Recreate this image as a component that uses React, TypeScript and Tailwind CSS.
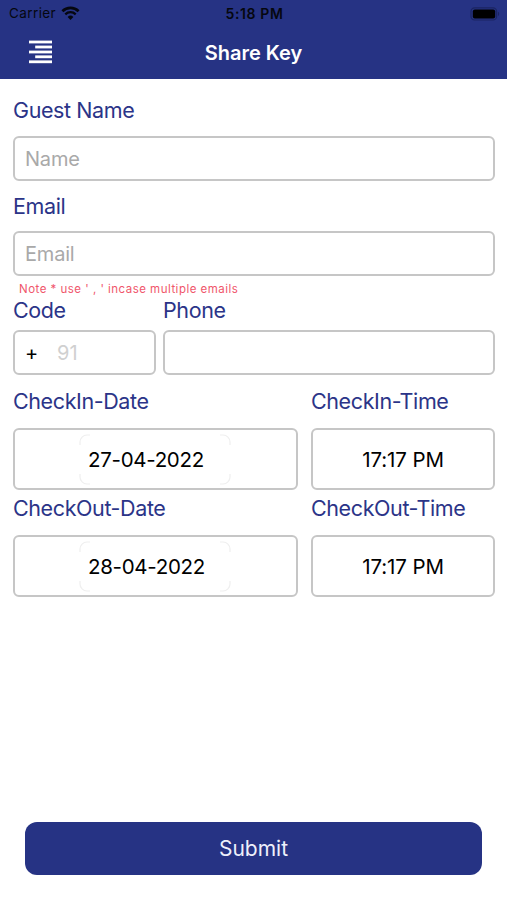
import type { ReactNode } from 'react'
import clsx from 'clsx'

interface LabelProps {
  children: ReactNode
  className?: string
}

function Label({ children, className }: LabelProps) {
  return (
    <div
      className={clsx('h-[30px] text-[21.5px] leading-[29px] tracking-[-0.4px] whitespace-nowrap text-[#2b3488]', className)}
    >
      {children}
    </div>
  )
}

interface BoxProps {
  children?: ReactNode
  className?: string
}

function Box({ children, className }: BoxProps) {
  return (
    <div className={clsx('flex items-center rounded-[6px] border-2 border-[#c6c6c6] bg-white', className)}>
      {children}
    </div>
  )
}

function WifiIcon() {
  return (
    <svg width="19" height="15" viewBox="0 0 19 15" className="ml-[5px]" fill="none" stroke="#05070f">
      <path d="M1.4 5.2a11.7 11.7 0 0 1 16.2 0" strokeWidth="2.7" />
      <path d="M4.3 8.3a7.5 7.5 0 0 1 10.4 0" strokeWidth="2.3" />
      <path d="M9.5 14l-2.9-3.1a4.2 4.2 0 0 1 5.8 0z" fill="#05070f" stroke="none" />
    </svg>
  )
}

function BatteryIcon() {
  return (
    <svg width="30" height="14" viewBox="0 0 30 14">
      <rect x="1" y="0.8" width="25.6" height="12.2" rx="3.6" fill="none" stroke="#1b2562" strokeWidth="1.2" />
      <rect x="2.8" y="2.4" width="22.4" height="9" rx="2" fill="#000" />
      <path d="M28 4.8v4.2c1.6-.6 1.6-3.6 0-4.2z" fill="#1b2562" />
    </svg>
  )
}

function MenuIcon() {
  return (
    <svg width="23" height="24" viewBox="0 0 23 24" fill="#fff">
      <rect x="0" y="0.6" width="23" height="2.8" />
      <rect x="6.2" y="5.6" width="16.8" height="2.8" />
      <rect x="0" y="10.6" width="23" height="2.8" />
      <rect x="6.2" y="15.4" width="16.8" height="2.8" />
      <rect x="0" y="20.4" width="23" height="2.8" />
    </svg>
  )
}

// faint corner marks around the date picker
function PickerFrame() {
  return (
    <svg
      width="152"
      height="51"
      viewBox="0 0 152 51"
      className="absolute top-[4px] left-[64px]"
      fill="none"
      stroke="#efefef"
      strokeWidth="1.2"
    >
      <path d="M1 11V8a7 7 0 0 1 7-7h3M141 1h3a7 7 0 0 1 7 7v3M151 40v3a7 7 0 0 1-7 7h-3M11 50H8a7 7 0 0 1-7-7v-3" />
    </svg>
  )
}

interface DateRowProps {
  name: string
  date: string
  time: string
}

function DateRow({ name, date, time }: DateRowProps) {
  return (
    <div className="grid grid-cols-[285px_184px] gap-x-[13px]">
      <Label>{name}-Date</Label>
      <Label>{name}-Time</Label>
      <Box className="relative mt-[11px] h-[62px] pt-[2px] pl-[73px]">
        <PickerFrame />
        <span className="relative text-[20.5px] tracking-[-0.3px] whitespace-nowrap text-black">{date}</span>
      </Box>
      <Box className="mt-[11px] h-[62px] justify-center pt-[2px]">
        <span className="text-[20.5px] tracking-[-0.1px] whitespace-nowrap text-black">{time}</span>
      </Box>
    </div>
  )
}

export default function App() {
  return (
    <div className="flex h-[900px] w-[507px] flex-col overflow-hidden bg-white font-['Inter',sans-serif]">
      <header className="h-[79px] shrink-0 bg-[#263384]">
        <div className="grid h-[27px] grid-cols-3 items-center pr-[7px] pl-[9px] text-[#05070f]">
          <div className="flex items-center text-[13.5px] tracking-[0.4px]">
            Carrier
            <WifiIcon />
          </div>
          <div className="text-center text-[14px] font-semibold tracking-[0.6px]">5:18 PM</div>
          <div className="flex justify-end">
            <BatteryIcon />
          </div>
        </div>
        <div className="grid h-[50px] grid-cols-[1fr_auto_1fr] items-center px-[29px]">
          <MenuIcon />
          <h1 className="pt-px text-[20px] font-semibold text-white">Share Key</h1>
        </div>
      </header>

      <main className="flex-1 pt-[17px] pr-[12px] pl-[13px]">
        <Label>Guest Name</Label>
        <Box className="mt-[10px] h-[45px] pl-[10px] text-[20px] tracking-[-0.2px] text-[#a9a9a9]">Name</Box>
        <Label className="mt-[11px]">Email</Label>
        <Box className="mt-[9px] h-[45px] pl-[10px] text-[20px] tracking-[-0.2px] text-[#a9a9a9]">Email</Box>
        <div className="h-[20px] pt-[5px] pl-[6px] text-[11.5px] leading-[17px] tracking-[0.48px] whitespace-nowrap text-[#f0566b]">
          Note * use ' , ' incase multiple emails
        </div>
        <div className="grid grid-cols-[143px_332px] gap-x-[7px]">
          <Label>Code</Label>
          <Label>Phone</Label>
          <Box className="mt-[4px] h-[45px] pl-[10px] text-[20px] text-[#d0d0d0]">
            <span className="w-[32px] text-black">+</span>
            91
          </Box>
          <Box className="mt-[4px] h-[45px]" />
        </div>
        <div className="mt-[12px] flex flex-col gap-[4px]">
          <DateRow name="CheckIn" date="27-04-2022" time="17:17 PM" />
          <DateRow name="CheckOut" date="28-04-2022" time="17:17 PM" />
        </div>
      </main>

      <footer className="shrink-0 px-[25px] pb-[25px]">
        <button className="block h-[53px] w-full rounded-[12px] bg-[#263384] pt-px text-[21px] text-[#eef0fb]">Submit</button>
      </footer>
    </div>
  )
}
